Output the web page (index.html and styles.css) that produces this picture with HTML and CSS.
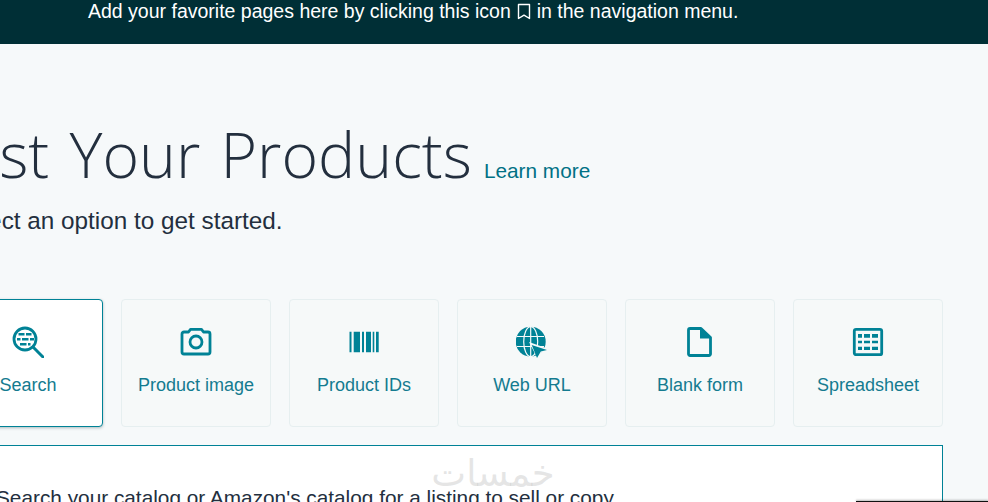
FILE: index.html
```html
<!DOCTYPE html>
<html lang="en">
<head>
<meta charset="utf-8">
<title>List Your Products</title>
<link rel="stylesheet" href="styles.css">
</head>
<body>
<div class="banner">
  <span>Add your favorite pages here by clicking this icon</span>
  <svg class="bookmark" width="14" height="17" viewBox="0 0 14 17"><path d="M1.500 1.500h11v14l-5.500-3.400-5.500 3.400z" fill="none" stroke="#fff" stroke-width="1.400" stroke-linejoin="round"/></svg>
  <span>in the navigation menu.</span>
</div>
<main class="main">
  <div class="title-row">
    <h1 class="title">List Your Products</h1>
    <a class="learn" href="#">Learn more</a>
  </div>
  <p class="subtitle">Select an option to get started.</p>
  <div class="cards">
    <div class="card card-active">
      <svg class="icon" viewBox="0 0 32 32"><circle cx="13" cy="13" r="11" fill="none" stroke="#008296" stroke-width="2.800"/><path d="M21 21l10 10" stroke="#008296" stroke-width="3" stroke-linecap="round"/><path d="M6.500 7h6v2.500h-6zM14 7h5.500v2.500H14zM10 12h6.500v2.500H10zM18 12h4v2.500h-4zM5 12h3.500v2.500H5zM8 17h6.500v2.500H8zM16 17h2.500v2.500H16z" fill="#008296"/></svg>
      <span class="card-label">Search</span>
    </div>
    <div class="card">
      <svg class="icon" viewBox="0 0 32 32"><path d="M4 6h4.500l2-2.700h11l2 2.700H28a2 2 0 0 1 2 2v18a2 2 0 0 1-2 2H4a2 2 0 0 1-2-2V8a2 2 0 0 1 2-2z" fill="none" stroke="#008296" stroke-width="2.800" stroke-linejoin="round"/><circle cx="16" cy="16" r="6" fill="none" stroke="#008296" stroke-width="2.800"/></svg>
      <span class="card-label">Product image</span>
    </div>
    <div class="card">
      <svg class="icon" viewBox="0 0 32 32"><path d="M1.500 5.700h2v20.600h-2zM5.700 5.700H12v20.600H5.700zM14 5.700h2v20.600h-2zM18 5.700h5v20.600h-5zM24.700 5.700h1.600v20.600h-1.600zM28 5.700h2.700v20.600H28z" fill="#008296"/></svg>
      <span class="card-label">Product IDs</span>
    </div>
    <div class="card">
      <svg class="icon" viewBox="0 0 32 32"><circle cx="14.700" cy="15.700" r="15" fill="#008296"/><g fill="none" stroke="#f6f9f9" stroke-width="1.200"><ellipse cx="14.700" cy="15.700" rx="7" ry="15"/><path d="M1 10.500h27M1 20.500h27M14.700 0v31"/></g><path d="M13 16l19 6.800-6 3.200-4.800 6z" fill="#f6f9f9"/><path d="M15.700 19l15.300 5-6.200 1.600-3.800 6.400z" fill="#008296"/></svg>
      <span class="card-label">Web URL</span>
    </div>
    <div class="card">
      <svg class="icon" viewBox="0 0 32 32"><path d="M6 2.500h11l9.500 9V28a1.500 1.500 0 0 1-1.500 1.500H6A1.500 1.500 0 0 1 4.500 28V4A1.500 1.500 0 0 1 6 2.500z" fill="none" stroke="#008296" stroke-width="2.800" stroke-linejoin="round"/><path d="M16 2.500v10h10.500z" fill="#008296"/></svg>
      <span class="card-label">Blank form</span>
    </div>
    <div class="card">
      <svg class="icon" viewBox="0 0 32 32"><rect x="2.300" y="3.300" width="27.400" height="25.400" rx="1.800" fill="none" stroke="#008296" stroke-width="2.800"/><path d="M6 8h4v3.700H6zM12 8h6v3.700h-6zM20 8h6v3.700h-6zM6 14.700h4v2.600H6zM12 14.700h6v2.600h-6zM20 14.700h6v2.600h-6zM6 20.700h4V24H6zM12 20.700h6V24h-6zM20 20.700h6V24h-6z" fill="#008296"/></svg>
      <span class="card-label">Spreadsheet</span>
    </div>
  </div>
  <section class="panel">
    <p class="panel-text">Search your catalog or Amazon's catalog for a listing to sell or copy</p>
  </section>
</main>
<div class="watermark" lang="ar" dir="rtl">خمسات</div>
<div class="corner-bar"></div>
</body>
</html>
```
FILE: styles.css
```css
html, body {
  margin: 0;
  height: 502px;
  overflow: hidden;
  background: #f6f9fa;
  font-family: "Liberation Sans", Arial, sans-serif;
  color: #0f1111;
}
.banner {
  height: 44px;
  box-sizing: border-box;
  padding-left: 88px;
  background: #002f36;
  color: #fff;
  font-size: 19.5px;
  line-height: 22px;
  display: flex;
  align-items: flex-start;
  gap: 6px;
}
.bookmark {
  margin-top: 3px;
}
.main {
  width: 990px;
  margin-left: -47px;
}
.title-row {
  display: flex;
  align-items: baseline;
  gap: 12px;
  margin-top: 64px;
}
.title {
  margin: 0;
  font-family: "Open Sans", sans-serif;
  font-weight: 300;
  font-size: 62.5px;
  word-spacing: 4px;
  line-height: 92px;
  color: #232f3e;
}
.learn {
  color: #007185;
  font-size: 20.8px;
  text-decoration: none;
}
.subtitle {
  margin: 6px 0 0;
  font-size: 24.3px;
  line-height: 30px;
  color: #232f3e;
}
.cards {
  display: flex;
  gap: 18px;
  margin-top: 63px;
}
.card {
  width: 150px;
  height: 128px;
  box-sizing: border-box;
  padding-top: 26px;
  display: flex;
  flex-direction: column;
  align-items: center;
  border: 1px solid #e6eff0;
  border-radius: 4px;
  background: #f6f9f9;
}
.card-active {
  background: #fff;
  border-color: #008296;
  box-shadow: 0 1px 3px rgba(0, 47, 54, .3);
}
.icon {
  width: 32px;
  height: 32px;
}
.card-label {
  margin-top: 16px;
  font-size: 18px;
  line-height: 22px;
  color: #147b90;
}
.panel {
  margin-top: 18px;
  width: 990px;
  height: 80px;
  box-sizing: border-box;
  border: 1px solid #008296;
  background: #fff;
  padding: 41px 0 0 42px;
}
.panel-text {
  margin: 0;
  font-size: 20.8px;
  line-height: 22px;
  color: #232f3e;
}
.watermark {
  position: absolute;
  left: 423px;
  top: 452px;
  width: 140px;
  text-align: center;
  font-family: "DejaVu Sans", sans-serif;
  font-size: 37px;
  line-height: 44px;
  color: rgba(180, 180, 180, .35);
}
.corner-bar {
  position: absolute;
  left: 856px;
  top: 501px;
  width: 132px;
  height: 1px;
  background: #111;
  box-shadow: 0 -1px 2px rgba(0, 0, 0, .4);
}
```
